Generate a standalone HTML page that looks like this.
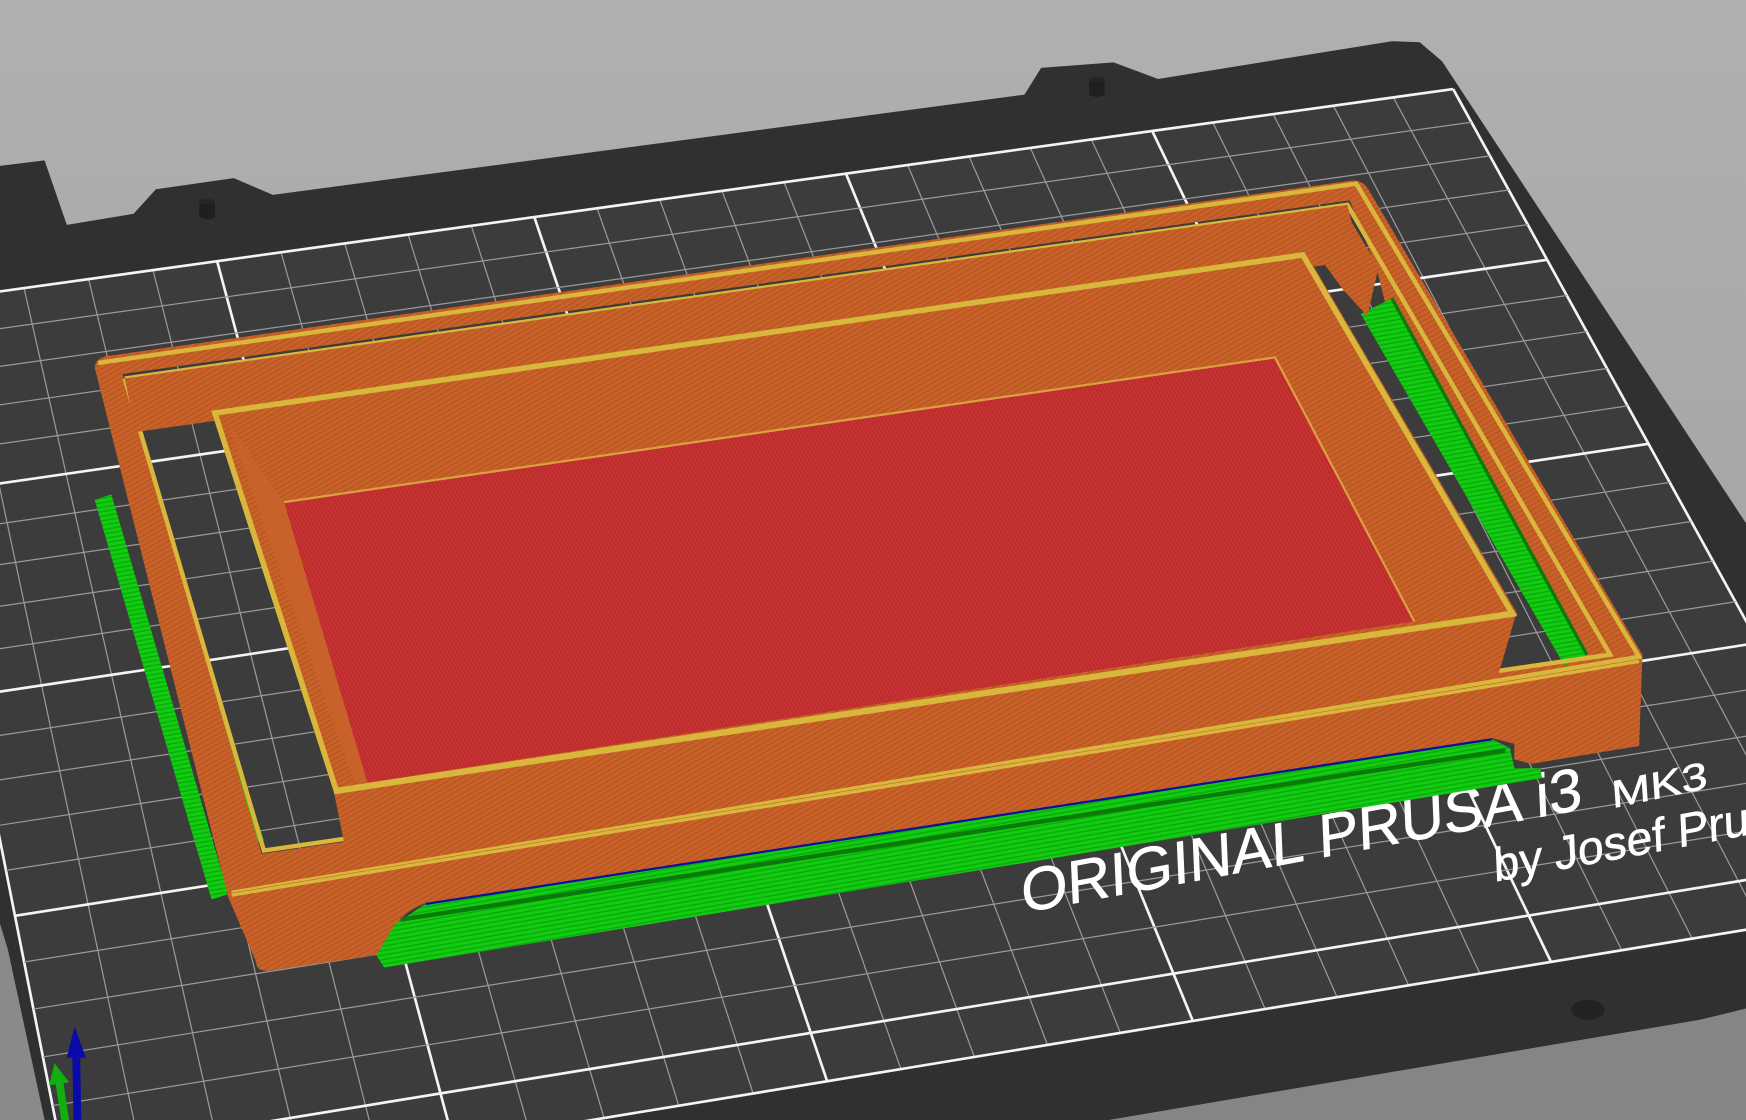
<!DOCTYPE html>
<html><head><meta charset="utf-8"><style>
html,body{margin:0;padding:0;width:1746px;height:1120px;overflow:hidden;background:#aaa}
svg{display:block}
</style></head><body>
<svg id="s" width="1746" height="1120" viewBox="0 0 1568 1006" preserveAspectRatio="none" xmlns="http://www.w3.org/2000/svg">
<defs>
<linearGradient id="bg" x1="0" y1="0" x2="0" y2="1">
<stop offset="0" stop-color="#b0b0b0"/><stop offset="0.5" stop-color="#a6a6a6"/><stop offset="1" stop-color="#8a8a8a"/>
</linearGradient>
<pattern id="or" width="4" height="4" patternUnits="userSpaceOnUse" patternTransform="rotate(-30)">
<rect width="4" height="4" fill="#c9622a"/><rect width="4" height="1.3" fill="#b8561f"/>
</pattern>
<pattern id="rd" width="3" height="3" patternUnits="userSpaceOnUse" patternTransform="rotate(60)">
<rect width="3" height="3" fill="#c83232"/><rect width="3" height="1" fill="#b52a2a"/>
</pattern>
<pattern id="gr" width="4" height="4" patternUnits="userSpaceOnUse" patternTransform="rotate(-10)">
<rect width="4" height="4" fill="#12cc12"/><rect width="4" height="1.2" fill="#0aa80a"/>
</pattern>
</defs>
<rect width="1568" height="1006" fill="url(#bg)"/>
<!-- bed plate -->
<polygon fill="#303030" points="0,149 40,144 60,202 120,192 140,170 210,160 245,175 920,85 935,61 1000,56 1040,71 1250,37 1275,38 1295,55 1568,470 1568,906 1527,916 1167,977 996,1006 40,1006 7,853 0,830"/>
<polygon fill="#858585" points="996,1006 1167,977 1527,916 1568,906 1568,1006"/>
<polygon fill="#8a8a8a" points="0,830 7,853 40,1006 0,1006"/>
<path d="M179,181 L179,195 Q186,199 193,195 L193,181 Z" fill="#1f1f1f"/><ellipse cx="186" cy="181" rx="7" ry="2.5" fill="#262626"/>
<path d="M978,71 L978,85 Q985,89 992,85 L992,71 Z" fill="#1f1f1f"/><ellipse cx="985" cy="71" rx="7" ry="2.5" fill="#262626"/>
<ellipse cx="1426" cy="907" rx="15" ry="9" fill="#222"/>
<g id="grid"></g>
<!-- text -->
<g fill="#fff" font-family="Liberation Sans, sans-serif">
<text transform="translate(918,820) rotate(-10.5) skewX(-8)" font-size="54" textLength="512" lengthAdjust="spacingAndGlyphs" stroke="#fff" stroke-width="0.6">ORIGINAL PRUSA i3</text>
<text transform="translate(1448,726) rotate(-12) skewX(-8)" font-size="34" textLength="88" lengthAdjust="spacingAndGlyphs" stroke="#fff" stroke-width="0.5">MK3</text>
<text transform="translate(1342,792) rotate(-10.5) skewX(-8)" font-size="42" stroke="#fff" stroke-width="0.5">by Josef Prusa</text>
</g>
<!-- axes -->
<polygon fill="#0a0aa8" points="67,922 60,950 65,950 66,1006 73,1006 72,950 77,950"/>
<polygon fill="#10b010" points="49,955 44,975 50,974 55,1006 62,1006 57,973 62,972"/>
<!-- left green strips -->
<polygon fill="url(#gr)" points="85,449 100,444 205,803 190,808"/>
<polygon fill="#12cc12" points="128,444 134,442 237,755 231,757"/>
<!-- outer frame with hole -->
<path fill="url(#or)" fill-rule="evenodd" d="M85,330 Q86,322 95,320 L1215,162 Q1225,162 1230,172 L1475,588 L1472,670 L1375,686 L1360,682 L1360,668 Q1355,660 1340,663 L380,812 Q360,820 355,834 L350,856 L240,872 Q230,872 230,864 L205,806 Z M110,336 L1212,180 L1450,588 L235,767 Z"/>
<!-- right wall inner face -->
<polygon fill="url(#or)" points="1212,180 1450,588 1420,592 1244,272 1236,240"/>
<!-- right green strip -->
<polygon fill="url(#gr)" points="1222,282 1250,268 1425,588 1405,598"/>
<polyline points="1250,268 1425,588" fill="none" stroke="#0a7a0a" stroke-width="3"/>
<!-- yellow rim lines of outer frame -->
<g fill="none" stroke="#d9b63c" stroke-width="4">
<path d="M88,326 L1218,165 L1472,590 L208,802"/>
<path d="M112,340 L1210,184 L1446,588 L237,764 L112,340"/>
</g>
<!-- back wall inner face -->
<polygon fill="url(#or)" points="112,340 1210,184 1214,200 1190,238 122,388"/>
<polygon fill="url(#or)" points="1190,238 1214,200 1238,240 1228,284 1206,260"/>
<!-- front wall front face -->
<polygon fill="url(#or)" points="208,802 1472,592 1472,670 1375,686 1360,682 1360,668 1340,663 380,812 358,822 350,856 240,872 230,864"/>
<line x1="208" y1="804" x2="1472" y2="594" stroke="#d9b63c" stroke-width="3"/>
<!-- inner tray -->
<polygon fill="url(#or)" points="190,369 1172,226 1362,550 1345,608 312,772 300,712"/>
<polygon fill="url(#rd)" points="255,451 1145,321 1270,558 330,703"/>
<!-- tray inner walls -->
<polygon fill="url(#or)" points="205,381 1160,240 1145,321 255,451"/>
<polygon fill="url(#or)" points="1160,240 1348,548 1270,558 1145,321"/>
<polygon fill="#c9622a" points="205,381 255,451 330,703 318,702"/>
<g fill="none" stroke="#d9b63c" stroke-width="5">
<polygon points="193,371 1170,229 1358,551 302,710"/>
</g>
<polyline points="255,451 1145,321 1270,558" fill="none" stroke="#d9a040" stroke-width="2"/>
<line x1="300" y1="712" x2="1362" y2="552" stroke="#d9b63c" stroke-width="3"/>
<!-- front green support -->
<polygon fill="url(#gr)" points="338,858 355,830 382,812 1340,664 1356,672 1360,690 1383,690 1385,699 345,869"/>
<polyline points="382,812 1340,664" fill="none" stroke="#1010a0" stroke-width="2"/>
<polyline points="360,826 1352,674" fill="none" stroke="#0a7a0a" stroke-width="4"/>
</svg>
<script>
(function(){
var P=[[65,1083],[1708,812],[1305,80],[-95,275]];
var x0=P[0][0],y0=P[0][1],x1=P[1][0],y1=P[1][1],x2=P[2][0],y2=P[2][1],x3=P[3][0],y3=P[3][1];
var dx1=x1-x2,dx2=x3-x2,dx3=x0-x1+x2-x3,dy1=y1-y2,dy2=y3-y2,dy3=y0-y1+y2-y3;
var den=dx1*dy2-dx2*dy1;
var g=(dx3*dy2-dx2*dy3)/den,h=(dx1*dy3-dx3*dy1)/den;
var a=x1-x0+g*x1,b=x3-x0+h*x3,c=x0,d=y1-y0+g*y1,e=y3-y0+h*y3,f=y0;
function m(u,v){var s=u/250,t=v/210,w=g*s+h*t+1;return[(a*s+b*t+c)/w,(d*s+e*t+f)/w];}
var ns="http://www.w3.org/2000/svg",G=document.getElementById('grid');
function poly(pts,fill){var p=document.createElementNS(ns,'polygon');p.setAttribute('points',pts.map(function(q){return q[0].toFixed(1)+','+q[1].toFixed(1)}).join(' '));p.setAttribute('fill',fill);G.appendChild(p);}
poly([m(0,0),m(250,0),m(250,210),m(0,210)],'#3c3c3c');
function line(p,q,col,wd){var l=document.createElementNS(ns,'line');l.setAttribute('x1',p[0]);l.setAttribute('y1',p[1]);l.setAttribute('x2',q[0]);l.setAttribute('y2',q[1]);l.setAttribute('stroke',col);l.setAttribute('stroke-width',wd);G.appendChild(l);}
for(var u=0;u<=250;u+=10){var maj=(u%50==0);line(m(u,0),m(u,210),maj?'#f4f4f4':'#9a9a9a',maj?2.4:1.1);}
for(var v=0;v<=210;v+=10){var maj=((v-10)%50==0)||v==0||v==210;line(m(0,v),m(250,v),maj?'#f4f4f4':'#9a9a9a',maj?2.4:1.1);}
})();
</script>
</body></html>
